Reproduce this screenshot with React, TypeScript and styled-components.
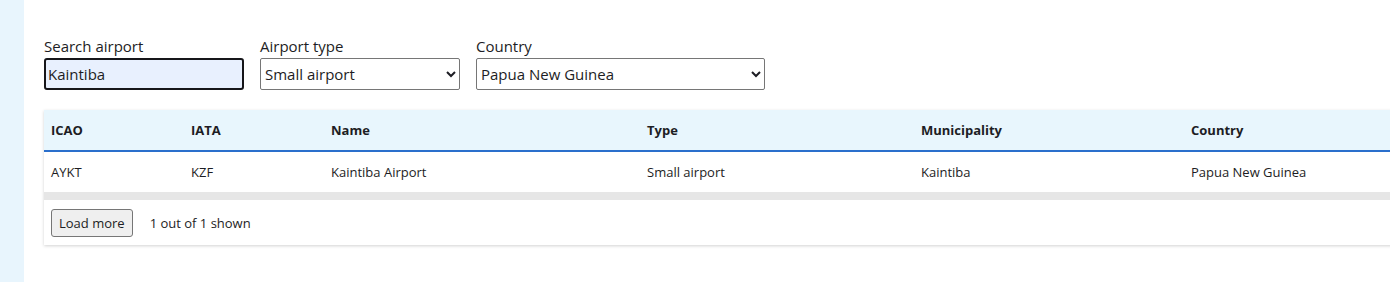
import styled, { createGlobalStyle } from 'styled-components';

const GlobalStyle = createGlobalStyle`
  body {
    margin: 0;
    background: #ffffff;
    font-family: "Open Sans", "Noto Sans", sans-serif;
    color: #1d1d24;
  }
`;

const Page = styled.div`
  display: flex;
  min-height: 282px;
  width: 1390px;
  overflow: hidden;
`;

const SideStrip = styled.aside`
  width: 24px;
  flex-shrink: 0;
  background-color: #e8f5fd;
`;

const Main = styled.main`
  flex: 1;
  min-width: 0;
  padding: 36px 0 0 20px;
  overflow: hidden;
`;

const Filters = styled.form`
  display: flex;
  gap: 16px;
`;

const Field = styled.label`
  display: flex;
  flex-direction: column;
  gap: 1px;
  font-size: 15px;
  line-height: 21px;
`;

const TextInput = styled.input`
  box-sizing: border-box;
  width: 200px;
  height: 32px;
  padding: 0 2px;
  border: 2px solid #16161a;
  border-radius: 3px;
  background-color: #e8f0fe;
  font: inherit;
  color: inherit;
  outline: none;
`;

const Select = styled.select<{ $width: number }>`
  box-sizing: border-box;
  width: ${(p) => p.$width}px;
  height: 32px;
  padding: 0;
  border: 1px solid #767676;
  border-radius: 2px;
  background-color: #ffffff;
  font: inherit;
  color: inherit;
`;

const Card = styled.section`
  margin-top: 20px;
  width: 1400px;
  background: #ffffff;
  box-shadow: 0 1px 3px rgba(0, 0, 0, 0.18);
`;

const Table = styled.table`
  border-collapse: collapse;
  table-layout: fixed;
  width: 100%;
  font-size: 13px;
`;

const HeadCell = styled.th<{ $width?: number }>`
  box-sizing: border-box;
  width: ${(p) => (p.$width ? `${p.$width}px` : 'auto')};
  height: 41px;
  padding: 0 7px;
  text-align: left;
  font-weight: 700;
  background-color: #e8f6fd;
  border-bottom: 2px solid #2a6fcc;
`;

const Cell = styled.td`
  height: 40px;
  padding: 0 7px;
`;

const ScrollTrack = styled.div`
  height: 8px;
  background-color: #e6e6e6;
`;

const Footer = styled.div`
  display: flex;
  align-items: center;
  gap: 17px;
  padding: 9px 7px 8px;
  font-size: 13px;
`;

const Button = styled.button`
  height: 28px;
  padding: 0 7px;
  border: 1px solid #767676;
  border-radius: 3px;
  background-color: #efefef;
  font: inherit;
  color: inherit;
`;

const columns = [
  { key: 'icao', label: 'ICAO', width: 140 },
  { key: 'iata', label: 'IATA', width: 140 },
  { key: 'name', label: 'Name', width: 316 },
  { key: 'type', label: 'Type', width: 274 },
  { key: 'municipality', label: 'Municipality', width: 270 },
  { key: 'country', label: 'Country' },
] as const;

const rows = [
  {
    icao: 'AYKT',
    iata: 'KZF',
    name: 'Kaintiba Airport',
    type: 'Small airport',
    municipality: 'Kaintiba',
    country: 'Papua New Guinea',
  },
];

const App = () => {
  return (
    <Page>
      <GlobalStyle />
      <SideStrip />

      <Main>
        <Filters onSubmit={(e) => e.preventDefault()}>
          <Field>
            Search airport
            <TextInput defaultValue="Kaintiba" />
          </Field>

          <Field>
            Airport type
            <Select $width={200} defaultValue="small">
              <option value="small">Small airport</option>
              <option value="medium">Medium airport</option>
              <option value="large">Large airport</option>
            </Select>
          </Field>

          <Field>
            Country
            <Select $width={289} defaultValue="PG">
              <option value="PG">Papua New Guinea</option>
            </Select>
          </Field>
        </Filters>

        <Card>
          <Table>
            <thead>
              <tr>
                {columns.map((c) => (
                  <HeadCell key={c.key} $width={'width' in c ? c.width : undefined}>
                    {c.label}
                  </HeadCell>
                ))}
              </tr>
            </thead>
            <tbody>
              {rows.map((r) => (
                <tr key={r.icao}>
                  {columns.map((c) => (
                    <Cell key={c.key}>{r[c.key]}</Cell>
                  ))}
                </tr>
              ))}
            </tbody>
          </Table>

          <ScrollTrack />

          <Footer>
            <Button type="button">Load more</Button>
            <span>1 out of 1 shown</span>
          </Footer>
        </Card>
      </Main>
    </Page>
  );
};

export default App;
